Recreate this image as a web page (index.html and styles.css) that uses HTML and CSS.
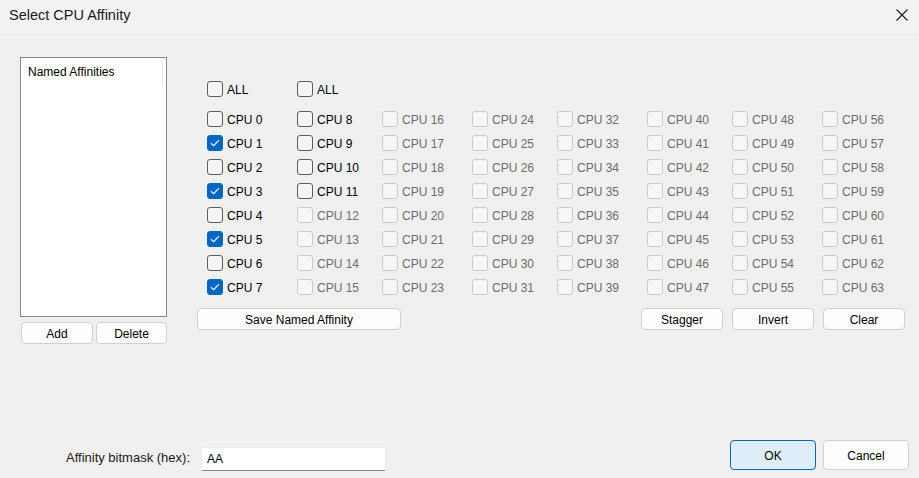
FILE: index.html
```html
<!DOCTYPE html>
<html lang="en">
<head>
    <meta charset="UTF-8">
    <meta name="viewport" content="width=device-width, initial-scale=1.0">
    <title>Select CPU Affinity</title>
    <link rel="stylesheet" href="styles.css">
</head>
<body>
    <div class="dialog">
        <div class="titlebar">
            <span class="title">Select CPU Affinity</span>
            <svg class="close" width="12" height="12" viewBox="0 0 12 12">
                <path d="M0.5 0.5 L11.5 11.5 M11.5 0.5 L0.5 11.5" stroke="#1a1a1a" stroke-width="1.1" fill="none"/>
            </svg>
        </div>

        <div class="content">
            <div class="named">
                <div class="listbox">
                    <div class="list-header">
                        <span>Named Affinities</span>
                    </div>
                </div>
                <div class="named-buttons">
                    <button class="btn add">Add</button>
                    <button class="btn delete">Delete</button>
                </div>
            </div>

            <div class="cpus">
                <div class="all-row">
                    <label class="check col-a"><span class="box"></span><span class="text">ALL</span></label>
                    <label class="check col-b"><span class="box"></span><span class="text">ALL</span></label>
                </div>
                <div class="cpu-grid" id="cpuGrid"></div>
                <div class="cpu-buttons">
                    <button class="btn save">Save Named Affinity</button>
                    <div class="spacer"></div>
                    <button class="btn small">Stagger</button>
                    <button class="btn small">Invert</button>
                    <button class="btn small">Clear</button>
                </div>
            </div>
        </div>

        <div class="footer">
            <label class="mask-label" for="mask">Affinity bitmask (hex):</label>
            <input class="mask-input" id="mask" type="text" value="AA">
            <div class="spacer"></div>
            <button class="btn dialog-btn default">OK</button>
            <button class="btn dialog-btn">Cancel</button>
        </div>
    </div>

    <script>
        // 12 logical processors available, mask is hex
        const cpuCount = 12;
        const mask = parseInt('AA', 16);
        const grid = document.getElementById('cpuGrid');
        const checkSvg = '<svg width="10" height="8" viewBox="0 0 10 8"><path d="M1 4.2 L3.6 6.6 L9 1.2" stroke="#fff" stroke-width="1.2" fill="none"/></svg>';

        for (let i = 0; i < 64; i++) {
            const label = document.createElement('label');
            const enabled = i < cpuCount;
            const checked = enabled && (mask >> i) & 1;
            label.className = `check ${enabled ? '' : 'disabled'} ${checked ? 'checked' : ''}`;
            label.innerHTML = `<span class="box">${checked ? checkSvg : ''}</span><span class="text">CPU ${i}</span>`;
            grid.appendChild(label);
        }
    </script>
</body>
</html>
```

FILE: styles.css
```css
body {
    margin: 0;
    font-family: "Liberation Sans", Arial, sans-serif;
    font-size: 12px;
    color: #000;
    background-color: #f0f0f0;
}
.dialog {
    width: 919px;
    height: 478px;
    display: flex;
    flex-direction: column;
    overflow: hidden;
}
.titlebar {
    height: 33px;
    flex-shrink: 0;
    display: flex;
    align-items: center;
    justify-content: space-between;
    padding: 0 11px 4px 9px;
    box-sizing: border-box;
    background-color: #f3f3f3;
}
.title {
    font-size: 14.5px;
    color: #1a1a1a;
}
.content {
    display: flex;
    padding: 24px 0 0 20px;
}
.named {
    width: 147px;
}
.listbox {
    height: 260px;
    box-sizing: border-box;
    border: 1px solid #828790;
    background-color: #fff;
}
.list-header {
    height: 28px;
    padding-left: 7px;
    margin-right: 3px;
    display: flex;
    align-items: center;
    border-right: 1px solid #e5e5e5;
    color: #000;
}
.named-buttons {
    display: flex;
    gap: 3px;
    margin: 5px 0 0 1px;
}
.btn {
    height: 22px;
    padding: 1px 0 0;
    font-family: inherit;
    font-size: 12px;
    color: #000;
    background-color: #fdfdfd;
    border: 1px solid #d0d0d0;
    border-radius: 4px;
}
.btn.add {
    width: 72px;
}
.btn.delete {
    width: 71px;
}
.cpus {
    width: 708px;
    margin-left: 30px;
    padding-top: 24px;
}
.all-row {
    display: flex;
    padding-left: 10px;
    margin-bottom: 14px;
}
.col-a {
    width: 90px;
}
.col-b {
    width: 85px;
}
.cpu-grid {
    display: grid;
    grid-template-columns: 90px 85px 90px 85px 90px 85px 90px 85px;
    grid-template-rows: repeat(8, 16px);
    grid-auto-flow: column;
    row-gap: 8px;
    padding-left: 10px;
}
.check {
    display: flex;
    align-items: center;
    gap: 4px;
    height: 16px;
    white-space: nowrap;
}
.check .text {
    padding-top: 2px;
}
.box {
    width: 16px;
    height: 16px;
    box-sizing: border-box;
    border: 1px solid #5d5d5d;
    border-radius: 3px;
    background-color: #f4f4f4;
    display: flex;
    align-items: center;
    justify-content: center;
    flex-shrink: 0;
}
.check.checked .box {
    background-color: #0067c0;
    border-color: #0067c0;
}
.check.disabled {
    color: #6d6d6d;
}
.check.disabled .box {
    border-color: #c9c9c9;
    background-color: #f6f6f6;
}
.cpu-buttons {
    display: flex;
    gap: 9px;
    margin-top: 13px;
}
.spacer {
    flex: 1;
}
.btn.save {
    width: 204px;
}
.btn.small {
    width: 82px;
}
.footer {
    margin-top: auto;
    display: flex;
    align-items: flex-end;
    padding: 0 10px 8px 0;
}
.mask-label {
    width: 190px;
    text-align: right;
    margin-bottom: 5px;
    font-size: 13px;
    color: #1a1a1a;
}
.mask-input {
    width: 185px;
    height: 24px;
    margin: 0 0 -1px 11px;
    box-sizing: border-box;
    padding: 0 5px;
    font-family: inherit;
    font-size: 12px;
    color: #000;
    background-color: #fff;
    border: 1px solid #ececec;
    border-bottom-color: #868686;
    border-radius: 2px;
    outline: none;
}
.btn.dialog-btn {
    width: 86px;
    height: 30px;
    margin-left: 7px;
}
.btn.default {
    background-color: #e0eef9;
    border-color: #0067c0;
}
```
